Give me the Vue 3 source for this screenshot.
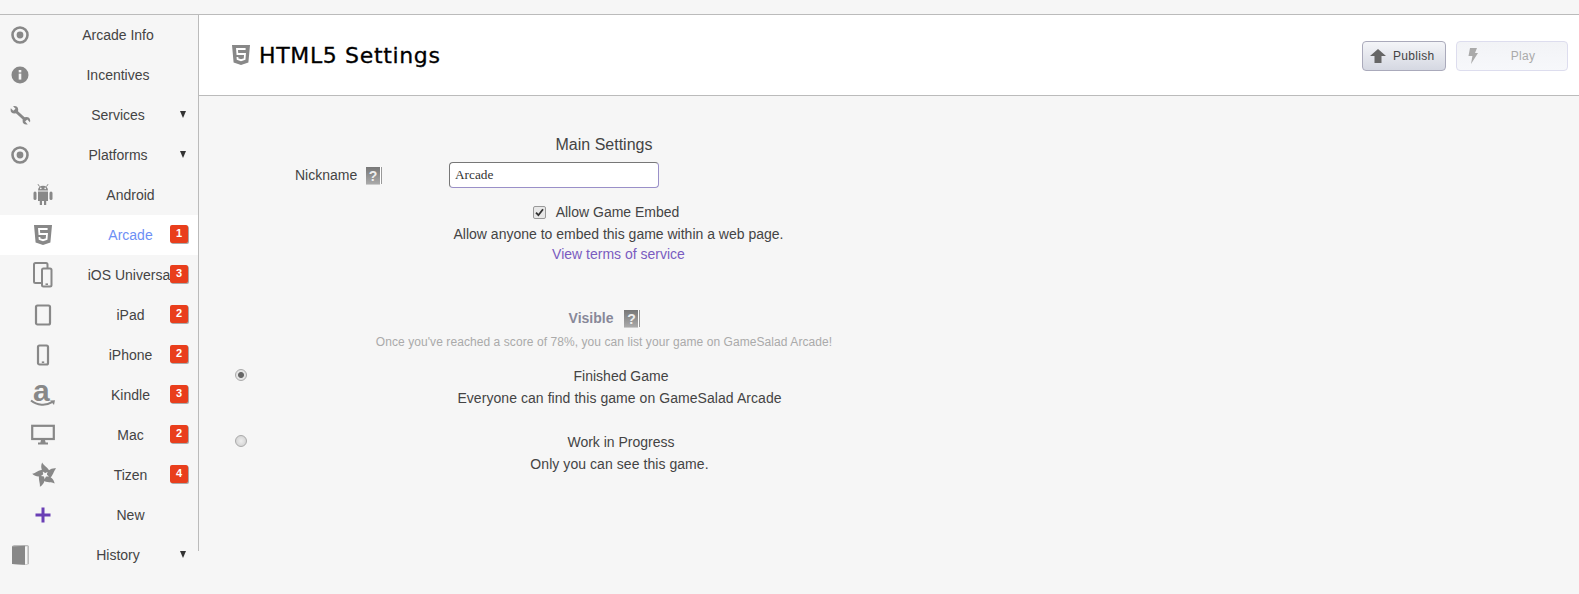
<script setup>
const menu = [
  { label: 'Arcade Info', icon: 'target' },
  { label: 'Incentives', icon: 'info' },
  { label: 'Services', icon: 'wrench', caret: true },
  { label: 'Platforms', icon: 'target', caret: true },
  { label: 'Android', icon: 'android', sub: true },
  { label: 'Arcade', icon: 'html5', sub: true, badge: 1, active: true },
  { label: 'iOS Universal', icon: 'devices', sub: true, badge: 3 },
  { label: 'iPad', icon: 'tablet', sub: true, badge: 2 },
  { label: 'iPhone', icon: 'phone', sub: true, badge: 2 },
  { label: 'Kindle', icon: 'amazon', sub: true, badge: 3 },
  { label: 'Mac', icon: 'monitor', sub: true, badge: 2 },
  { label: 'Tizen', icon: 'tizen', sub: true, badge: 4 },
  { label: 'New', icon: 'plus', sub: true },
  { label: 'History', icon: 'book', caret: true }
]
const blade = 'M12.4 10.2 C9.4 9.4 7.2 5 9.4 0.4 C11 3.4 14.6 4.8 16.8 9.4 C15 8.8 13.4 9.2 12.4 10.2Z'
</script>

<template>
  <div class="page">
    <div class="topstrip"></div>
    <div class="shell">
      <aside class="sidebar">
        <nav class="menu">
          <div
            v-for="item in menu"
            :key="item.label"
            class="row"
            :class="{ sub: item.sub, active: item.active }"
          >
            <span class="ico">
              <svg v-if="item.icon === 'target'" width="22" height="22" viewBox="0 0 22 22">
                <circle cx="11" cy="11" r="7.5" fill="none" stroke="#888" stroke-width="2.6" />
                <circle cx="11" cy="11" r="3.4" fill="#888" />
              </svg>
              <svg v-else-if="item.icon === 'info'" width="22" height="22" viewBox="0 0 22 22">
                <circle cx="11" cy="11" r="8.5" fill="#888" />
                <rect x="9.7" y="9.6" width="2.6" height="6" fill="#f6f6f6" />
                <rect x="9.7" y="6" width="2.6" height="2.4" fill="#f6f6f6" />
              </svg>
              <svg v-else-if="item.icon === 'wrench'" width="22" height="22" viewBox="0 0 22 22">
                <path d="M5.5 6 L17 16.5" stroke="#888" stroke-width="3" fill="none" />
                <circle cx="5.4" cy="5.8" r="3.8" fill="#888" />
                <circle cx="17.4" cy="16.8" r="3.8" fill="#888" />
                <path d="M5.4 5.8 L1 1 M17.2 16.6 L21.6 21.4" stroke="#f6f6f6" stroke-width="3" fill="none" />
              </svg>
              <svg v-else-if="item.icon === 'android'" width="22" height="24" viewBox="0 0 22 24">
                <path d="M6 7.5 C6 4.5 8 2.8 11 2.8 C14 2.8 16 4.5 16 7.5Z" fill="#888" />
                <path d="M7.5 3.6 L6 1.2 M14.5 3.6 L16 1.2" stroke="#888" stroke-width="1" />
                <circle cx="8.8" cy="5.4" r=".8" fill="#f6f6f6" />
                <circle cx="13.2" cy="5.4" r=".8" fill="#f6f6f6" />
                <path d="M6 8.5 H16 V18 H14.2 V22 H12 V18 H10 V22 H7.8 V18 H6Z" fill="#888" />
                <rect x="1.5" y="8.5" width="3" height="8.5" rx="1.5" fill="#888" />
                <rect x="17.5" y="8.5" width="3" height="8.5" rx="1.5" fill="#888" />
              </svg>
              <svg v-else-if="item.icon === 'html5'" width="20" height="22" viewBox="0 0 20 22">
                <path d="M1 1 H19 L17.4 18.4 L10 21 L2.6 18.4Z" fill="#888" />
                <path d="M14.6 5 H6 L6.4 10 H14 L13.6 15 L10 16.2 L6.6 15 L6.4 13" fill="none" stroke="#fff" stroke-width="1.8" />
              </svg>
              <svg v-else-if="item.icon === 'devices'" width="22" height="26" viewBox="0 0 22 26">
                <rect x="2" y="1" width="13.5" height="20" rx="1.5" fill="none" stroke="#888" stroke-width="2" />
                <rect x="10" y="6.5" width="9.5" height="18" rx="1.5" fill="#f6f6f6" stroke="#888" stroke-width="2" />
                <rect x="13.5" y="21.4" width="2.5" height="1.6" fill="#888" />
              </svg>
              <svg v-else-if="item.icon === 'tablet'" width="18" height="22" viewBox="0 0 18 22">
                <rect x="2" y="1.5" width="14" height="19" rx="1.5" fill="none" stroke="#888" stroke-width="2.2" />
              </svg>
              <svg v-else-if="item.icon === 'phone'" width="14" height="22" viewBox="0 0 14 22">
                <rect x="2" y="1.5" width="10" height="19" rx="1.5" fill="none" stroke="#888" stroke-width="2.2" />
                <rect x="5.8" y="17.4" width="2.4" height="1.6" fill="#888" />
              </svg>
              <span v-else-if="item.icon === 'amazon'" class="amazon">
                <span class="amazon-a">a</span>
                <svg class="amazon-smile" width="26" height="9" viewBox="0 0 26 9">
                  <path d="M1 1.5 C7 6.5 16 7 22 3.2" fill="none" stroke="#888" stroke-width="2" />
                  <path d="M20 1.6 L25 1.2 L24 6 Z" fill="#888" />
                </svg>
              </span>
              <svg v-else-if="item.icon === 'monitor'" width="24" height="22" viewBox="0 0 24 22">
                <rect x="1.2" y="1.8" width="21.6" height="13.2" fill="none" stroke="#888" stroke-width="2.2" />
                <path d="M10 16 H14 L14.6 18.6 H17 V20.4 H7 V18.6 H9.4Z" fill="#888" />
              </svg>
              <svg v-else-if="item.icon === 'tizen'" class="tizen" width="26" height="26" viewBox="0 0 24 24">
                <g fill="#888">
                  <path v-for="a in [0, 72, 144, 216, 288]" :key="a" :d="blade" :transform="`rotate(${a} 12 12)`" />
                </g>
              </svg>
              <svg v-else-if="item.icon === 'plus'" width="18" height="18" viewBox="0 0 18 18">
                <path d="M7.5 1.5 H10.5 V7.5 H16.5 V10.5 H10.5 V16.5 H7.5 V10.5 H1.5 V7.5 H7.5Z" fill="#6a3fb5" />
              </svg>
              <svg v-else-if="item.icon === 'book'" width="20" height="22" viewBox="0 0 20 22">
                <path d="M4 1 L17.5 1 L19 2 V20 L16 21 L2 20 V2Z" fill="#bbb" />
                <path d="M2 2.4 L15 1.8 V20.8 L2 20Z" fill="#888" />
                <path d="M15 2.4 L17.4 2.2 V20 L15 20.6Z" fill="#f6f6f6" />
              </svg>
            </span>
            <span class="label">{{ item.label }}</span>
            <span v-if="item.badge" class="badge">{{ item.badge }}</span>
            <span v-if="item.caret" class="caret"></span>
          </div>
        </nav>
      </aside>

      <main class="main">
        <header class="header">
          <div class="title">
            <svg width="20" height="22" viewBox="0 0 20 22">
              <path d="M1 1 H19 L17.4 18.4 L10 21 L2.6 18.4Z" fill="#888" />
              <path d="M14.6 5 H6 L6.4 10 H14 L13.6 15 L10 16.2 L6.6 15 L6.4 13" fill="none" stroke="#fff" stroke-width="1.8" />
            </svg>
            <h1>HTML5 Settings</h1>
          </div>
          <div class="actions">
            <button class="btn publish" type="button">
              <svg width="16" height="14" viewBox="0 0 16 14"><path d="M8 0 L16 7 H11.5 V14 H4.5 V7 H0Z" fill="#666" /></svg>
              <span>Publish</span>
            </button>
            <button class="btn play" type="button">
              <svg width="10" height="16" viewBox="0 0 10 16"><path d="M2 0 H9 L7 5 H10 L3 16 L4.4 8 H0.5Z" fill="#aaa" /></svg>
              <span>Play</span>
            </button>
          </div>
        </header>

        <section class="content">
          <h2 class="main-title">Main Settings</h2>
          <div class="nick-row">
            <label class="nick-label">Nickname</label>
            <span class="help"><i>?</i></span>
            <input class="nick-input" value="Arcade" />
          </div>
          <div class="embed">
            <label class="embed-check">
              <span class="checkbox">
                <svg width="9" height="9" viewBox="0 0 9 9"><path d="M1 4.6 L3.4 7.2 L8 1.2" fill="none" stroke="#333" stroke-width="1.8" /></svg>
              </span>
              <span>Allow Game Embed</span>
            </label>
            <p>Allow anyone to embed this game within a web page.</p>
            <a class="terms">View terms of service</a>
          </div>

          <div class="visible">
            <div class="visible-head">
              <strong>Visible</strong>
              <span class="help"><i>?</i></span>
            </div>
            <p class="hint">Once you've reached a score of 78%, you can list your game on GameSalad Arcade!</p>
          </div>

          <div class="radio-row first">
            <span class="radio on"></span>
            <div class="radio-text">
              <div>Finished Game</div>
              <div class="desc">Everyone can find this game on GameSalad Arcade</div>
            </div>
          </div>
          <div class="radio-row">
            <span class="radio"></span>
            <div class="radio-text">
              <div>Work in Progress</div>
              <div class="desc">Only you can see this game.</div>
            </div>
          </div>
        </section>
      </main>
    </div>
  </div>
</template>

<style>
html, body { margin: 0; background: #f6f6f6; }
</style>

<style scoped>
.page {
  width: 1579px;
  height: 594px;
  overflow: hidden;
  background: #f6f6f6;
  font-family: "Liberation Sans", Arial, sans-serif;
  font-size: 14px;
  color: #444;
}
.topstrip { height: 14px; border-bottom: 1px solid #bbb; }
.shell { display: flex; align-items: flex-start; }
.sidebar { width: 198px; height: 536px; border-right: 1px solid #bbb; }
.menu { width: 198px; }
.row {
  position: relative;
  display: flex;
  align-items: center;
  height: 40px;
  width: 198px;
}
.row .label {
  flex: 1;
  margin-right: 2px;
  text-align: center;
  white-space: nowrap;
  overflow: hidden;
}
.row.sub { padding-left: 23px; box-sizing: border-box; }
.row.sub .label { margin-right: 0; }
.row.active { background: #fff; }
.row.active .label { color: #6d8ff5; }
.ico {
  flex: none;
  width: 40px;
  height: 40px;
  display: flex;
  align-items: center;
  justify-content: center;
}
.tizen { margin-left: 3px; }
.badge {
  position: absolute;
  left: 170px;
  top: 10px;
  width: 18px;
  height: 18px;
  border-radius: 2px;
  background: #e93e1c;
  box-shadow: 1px 1px 0 #aaa;
  color: #fff;
  font-size: 11px;
  font-weight: 700;
  line-height: 17px;
  text-align: center;
}
.caret {
  position: absolute;
  left: 180px;
  top: 16px;
  width: 0;
  height: 0;
  border-left: 3.5px solid transparent;
  border-right: 3.5px solid transparent;
  border-top: 7px solid #333;
}
.amazon { position: relative; display: block; width: 26px; height: 26px; }
.amazon-a {
  position: absolute;
  left: 3px;
  top: -6px;
  font-size: 30px;
  line-height: 30px;
  font-weight: 700;
  color: #888;
}
.amazon-smile { position: absolute; left: 0; top: 17px; }

.main { flex: 1; min-width: 0; }
.header {
  height: 80px;
  background: #fff;
  border-bottom: 1px solid #bbb;
  display: flex;
  align-items: center;
  justify-content: space-between;
  padding: 0 11px 0 32px;
}
.title { display: flex; align-items: center; gap: 8px; }
h1 {
  margin: 0;
  font-family: "DejaVu Sans", sans-serif;
  font-weight: 400;
  font-size: 22px;
  letter-spacing: .65px;
  color: #000;
  -webkit-text-stroke: .3px #000;
}
.actions { display: flex; gap: 10px; margin-top: 1px; }
.btn {
  display: flex;
  align-items: center;
  height: 30px;
  box-sizing: border-box;
  border-radius: 4px;
  font-family: inherit;
  font-size: 12px;
  letter-spacing: .3px;
  padding: 0 7px;
}
.publish {
  width: 84px;
  gap: 7px;
  border: 1px solid #aab;
  background: linear-gradient(#f4f5f8, #d5d8e2);
  color: #444;
}
.play {
  width: 112px;
  border: 1px solid #dde;
  background: linear-gradient(#f2f3f6, #f7f8fb);
  color: #aaa;
  gap: 0;
  padding-left: 11px;
}
.play span { flex: 1; text-align: center; padding-left: 8px; }

.content { padding-top: 40px; }
.main-title {
  margin: 0;
  width: 810px;
  text-align: center;
  font-size: 16px;
  font-weight: 400;
  line-height: 18px;
  color: #444;
}
.nick-row { display: flex; align-items: center; margin-top: 8px; padding-left: 96px; }
.nick-label { width: 71px; }
.help {
  display: inline-block;
  flex: none;
  width: 14px;
  height: 17px;
  margin-right: 2px;
  background: linear-gradient(#777, #aaa);
  box-shadow: 1px 0 0 #fff, 2px 0 0 #999, 0 1px 0 #ccc;
}
.help i {
  display: block;
  font-style: normal;
  font-weight: 700;
  font-size: 14px;
  line-height: 18px;
  text-align: center;
  color: #eee;
}
.nick-input {
  margin-left: 67px;
  width: 210px;
  height: 26px;
  box-sizing: border-box;
  border: 1px solid #9a90c8;
  border-left-color: #777;
  border-top-color: #777;
  border-radius: 4px;
  padding: 0 5px;
  font-family: "Liberation Serif", serif;
  font-size: 13.3px;
  color: #333;
  background: #fff;
  outline: none;
}
.embed { width: 839px; text-align: center; margin-top: 14px; line-height: 20px; }
.embed p { margin: 0; }
.embed-check {
  display: flex;
  align-items: center;
  justify-content: center;
  gap: 10px;
  width: 839px;
  padding-right: 25px;
  box-sizing: border-box;
  height: 20px;
  margin-bottom: 2px;
}
.checkbox {
  width: 11px;
  height: 11px;
  border: 1px solid #999;
  border-radius: 2px;
  background: #e8e8e8;
  display: flex;
  align-items: center;
  justify-content: center;
}
.terms { color: #7a5cc0; display: block; margin-top: 0; }

.visible { width: 810px; text-align: center; margin-top: 44px; }
.visible-head {
  display: flex;
  align-items: center;
  justify-content: center;
  gap: 11px;
  height: 20px;
  font-weight: 700;
  font-size: 14px;
  color: #889;
  padding-left: 1px;
}
.hint { margin: 4px 0 0; font-size: 12px; letter-spacing: .075px; line-height: 20px; color: #aaa; }
.radio-row {
  display: flex;
  align-items: flex-start;
  padding-left: 36px;
  margin-top: 22px;
}
.radio-row.first { margin-top: 13px; }
.radio {
  flex: none;
  width: 12px;
  height: 12px;
  margin-top: 4px;
  border-radius: 50%;
  border: 1px solid #aaa;
  background: radial-gradient(#eee, #ccc);
  box-sizing: border-box;
}
.radio.on { background: radial-gradient(circle, #666 0 2.5px, #e4e4e4 3.5px); }
.radio-text { width: 748px; text-align: center; line-height: 22px; }
.desc { letter-spacing: .06px; padding-right: 3px; }
</style>
